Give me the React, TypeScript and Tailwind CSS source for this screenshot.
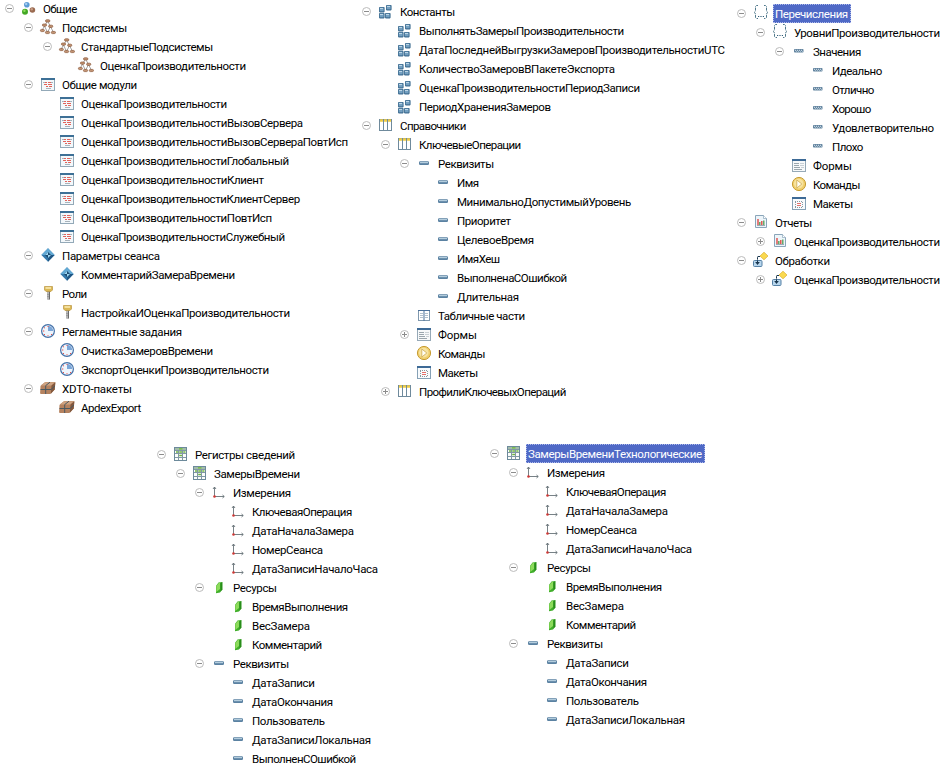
import { useLayoutEffect, useRef } from "react";
import type { ReactNode } from "react";

type Kind =
  | "common" | "subsystem" | "module" | "param" | "role" | "job" | "xdto" | "constant"
  | "catalog" | "attr" | "tabular" | "form" | "command" | "template" | "enum" | "value"
  | "report" | "processing" | "register" | "dimension" | "resource";

// [level, toggle, icon, label, label width, selected]
type Row = [number, "-" | "+" | "", Kind, string, number, boolean?];

const icons: Record<Kind, ReactNode> = {
  common: (
    <>
      <circle cx="7.8" cy="5.7" r="2.8" fill="#5b9bd5" />
      <circle cx="7.2" cy="5" r="1.2" fill="#a5cdf0" />
      <circle cx="6" cy="12.7" r="3" fill="#43a825" />
      <circle cx="5.4" cy="11.8" r="1.2" fill="#8fe05c" />
      <circle cx="13.4" cy="11" r="2.8" fill="#9a6a50" />
      <circle cx="12.8" cy="10.2" r="1.2" fill="#c69c84" />
    </>
  ),
  subsystem: (
    <>
      <path d="M9.5 3L6.5 8L4.3 12M6.5 8L9.5 14.5M9.5 3L12.5 8.5L9.5 14.5M12.5 8.5L15.5 14.5" stroke="#7d7a78" strokeWidth=".7" fill="none" />
      <g fill="#c39474" stroke="#8a5636" strokeWidth=".7">
        <rect x="7.5" y="1.8" width="4.4" height="2.2" rx="1.1" />
        <rect x="4.4" y="6" width="4.2" height="2.2" rx="1.1" />
        <rect x="10.6" y="7.2" width="4.2" height="2.2" rx="1.1" />
        <rect x="2.4" y="11.4" width="4" height="2.2" rx="1.1" />
        <rect x="7.4" y="13.4" width="4.2" height="2.2" rx="1.1" />
        <rect x="13.3" y="13.4" width="4.2" height="2.2" rx="1.1" />
      </g>
    </>
  ),
  module: (
    <>
      <rect x="3.5" y="3.5" width="13" height="12" fill="#f3f8fb" stroke="#93a9b8" />
      <rect x="3" y="3" width="14" height="2" fill="#3d7096" />
      <path d="M5 7.5h2M13 7.5h2M8 13.5h5" stroke="#a8b3bb" />
      <path d="M7 7.5h2M10 7.5h3M6 9.5h3M10 9.5h4M8 11.5h2M11 11.5h3" stroke="#e2635a" />
    </>
  ),
  param: (
    <>
      <path d="M10 2.3L16.6 9L10 15.7L3.4 9Z" fill="#3278ab" />
      <path d="M10 2.3L16.6 9H10L3.4 9Z" fill="#62a9d4" />
      <path d="M10 15.7L16.6 9H10Z" fill="#1f5684" />
      <path d="M10 6L13 9L10 12L7 9Z" fill="#1b486e" />
      <path d="M10 6L10 9L7 9Z M10 12V9H13Z" fill="#9ad6f1" />
    </>
  ),
  role: (
    <>
      <path d="M9 7h3v8l-1.5 1L9 15.5Z" fill="#b5b5b5" />
      <path d="M11.5 7.5v8" stroke="#6b6b6b" />
      <path d="M9.5 10.5h1M9.5 12.5h1" stroke="#858585" />
      <path d="M6.5 2.5h8v3.5l-1.5 1.5H8L6.5 6Z" fill="#dcb955" stroke="#b18a31" strokeWidth=".6" />
      <path d="M7.5 4h5.5" stroke="#fcf0bd" strokeWidth="1.4" />
    </>
  ),
  job: (
    <>
      <circle cx="10" cy="9" r="6.4" fill="#eef5fd" stroke="#4672a8" strokeWidth="1.2" />
      <path d="M10 9V3.8a5.2 5.2 0 0 1 5.2 5.2Z" fill="#7ba6d8" />
      <path d="M9.5 4.5h1M5 9h1.3M9.5 13.7h1M6 5.8h1M6 12.5h1M13 12.5h1" stroke="#ee4f47" />
    </>
  ),
  xdto: (
    <>
      <path d="M2.5 7Q3 6 4 5.5L7 3.3Q7.5 3 8.5 3H16.5Q17.5 3 17.4 4L16.7 10.5L13 14.6Q12.5 15 12 15H3Q2 15 2.1 14Z" fill="#b5825f" />
      <path d="M3 6.6L7 3.2H17.2L13.5 6.6Z" fill="#cfa381" />
      <path d="M13.5 6.6L17.3 3.3L16.7 10.5L12.8 14.8Z" fill="#82583e" />
      <path d="M2.5 10.5H13L17 7M7.7 15V6.6L12 3.2" stroke="#4a5961" fill="none" />
    </>
  ),
  constant: (
    <>
      {[[3, 5], [3, 11], [9, 11], [10, 3]].map(([x, y]) => (
        <g key={`${x}-${y}`}>
          <rect x={x} y={y} width="5.6" height="5.4" rx=".8" fill="#416f93" />
          <rect x={x + 0.8} y={y + 0.7} width="3.8" height="3.5" rx=".4" fill="#74a0c1" />
          <path d={`M${x + 1} ${y + 1.5}h3`} stroke="#bdd6e6" />
        </g>
      ))}
    </>
  ),
  catalog: (
    <>
      <rect x="3.5" y="3.5" width="12" height="11" fill="#fff" stroke="#6f8a9c" />
      <path d="M7.5 3v12M11.5 3v12" stroke="#6f8a9c" />
      <path d="M4 4.5h3M8 4.5h3M12 4.5h3" stroke="#efcd45" strokeWidth="2.6" />
    </>
  ),
  attr: (
    <>
      <rect x="5" y="7.3" width="10" height="3.7" rx="1.2" fill="#5b82a2" />
      <path d="M6 8.6h8" stroke="#b4cddd" strokeWidth="1.2" />
    </>
  ),
  tabular: (
    <>
      <rect x="4.5" y="4.5" width="11" height="10" fill="#fff" stroke="#7f98ae" />
      <path d="M4 4.5h12M10 4v11" stroke="#4a709a" />
      <path d="M6 7.5h3M11 7.5h3M6 9.5h3M11 9.5h3M6 11.5h3M11 11.5h3" stroke="#b3c1cc" />
    </>
  ),
  form: (
    <>
      <rect x="3.5" y="3.5" width="13" height="12" fill="#f7f9fa" stroke="#96a9b7" />
      <rect x="3" y="3" width="14" height="2" fill="#3d6a96" />
      <path d="M5 7.5h5M5 9.5h5M5 11.5h6M5 13.5h8" stroke="#9ba6ad" />
      <path d="M11 7.5h4M11 9.5h4M12 11.5h3" stroke="#c9d0d5" />
    </>
  ),
  command: (
    <>
      <circle cx="10" cy="9" r="6.6" fill="#f0cf6d" stroke="#c79d35" />
      <circle cx="9.7" cy="8.6" r="4.8" fill="#f7e3a0" />
      <path d="M7.8 5L12.8 9L7.8 13Z" fill="#fffef5" stroke="#cda94e" strokeWidth=".8" />
    </>
  ),
  template: (
    <>
      <rect x="3.5" y="3.5" width="13" height="12" fill="#f8fbfd" stroke="#86a1b6" />
      <rect x="3" y="3" width="14" height="2" fill="#3d6a96" />
      <path d="M6 7.5h8M6 13.5h8M6.5 8v6M13.5 8v6" stroke="#8a959d" strokeDasharray="1 1" />
      <path d="M8 9.5h4M8 11.5h4" stroke="#e46f69" />
    </>
  ),
  enum: (
    <>
      <path d="M7 1.5H5.5L4.5 2.5V6.5L3.5 8.5L4.5 10V13.5L5.5 14.5H7M13 1.5H14.5L15.5 2.5V6.5L16.5 8.5L15.5 10V13.5L14.5 14.5H13" stroke="#4f788b" strokeDasharray="3.2 .8" fill="none" />
      <path d="M7 12.5h1.2M9.4 12.5h1.2M11.8 12.5h1.2" stroke="#315e78" strokeWidth="1.2" />
    </>
  ),
  value: (
    <>
      <rect x="5" y="7" width="9.5" height="3.6" rx=".8" fill="#6485a0" />
      <path d="M6 8.3h8" stroke="#dbe7ee" strokeDasharray="1 1" />
      <path d="M7 9.4h7" stroke="#b7cedb" strokeDasharray="1 1" strokeWidth=".8" />
    </>
  ),
  report: (
    <>
      <path d="M4.5 2.5H12.5L15.5 5.5V14.5H4.5Z" fill="#edf5fa" stroke="#8aa5b9" />
      <path d="M12.5 2.5V5.5H15.5" fill="#fff" stroke="#8aa5b9" strokeWidth=".7" />
      <path d="M7 6v6M10.8 8v4" stroke="#df4a45" strokeWidth="1.4" />
      <path d="M8.8 9v3M12.8 7.5v4.5" stroke="#4fa053" strokeWidth="1.3" />
      <path d="M6 12.5h8" stroke="#8494a2" strokeWidth=".8" />
    </>
  ),
  processing: (
    <>
      <path d="M13 1.2L17 5L13 8.8L9 5Z" fill="#fad94f" stroke="#dbb030" strokeWidth=".7" />
      <rect x="2.5" y="9.5" width="8.5" height="6" rx="1" fill="#b8d6ed" stroke="#5580a5" />
      <path d="M9 5.5H6.5V12" fill="none" stroke="#18354d" strokeDasharray="2.4 .8" />
      <path d="M4.2 11L6.5 14L8.8 11Z" fill="#18354d" />
    </>
  ),
  register: (
    <>
      <rect x="3.5" y="2.5" width="12" height="13" fill="#fbfdfb" stroke="#6d8a9b" />
      <path d="M4 4h11" stroke="#a3bcaa" strokeWidth="2" />
      <path d="M8 3.8h3.5" stroke="#7bbf4e" strokeWidth="1.6" />
      <path d="M4 5.5h11M4 8.5h11M4 12.5h11M7.5 5v10M11.5 5v10" stroke="#8198a5" />
      <path d="M5 7h2M8.2 7h2.8M12.2 7h2.3M8.2 10.5h2.8" stroke="#6fb443" strokeWidth="1.6" />
    </>
  ),
  dimension: (
    <>
      <path d="M5.5 4V13.5H15M4 6L5.5 4L7 6M13.5 12L15.3 13.5L13.5 15" stroke="#687378" strokeWidth=".9" fill="none" />
      <circle cx="5.5" cy="13.5" r="1.3" fill="#cf3936" />
    </>
  ),
  resource: (
    <>
      <path d="M7 8L9.5 4.5L13.3 4V11.5L11 14.5L7 15.2Z" fill="#3fae2a" />
      <path d="M7.3 8.2L9.7 5L11 4.8V11L7.3 14Z" fill="#8ddb5c" />
      <path d="M11.5 5.5V13.7L13.3 11.5V4Z" fill="#2a8c1b" />
    </>
  ),
};

const P = "ОценкаПроизводительности";

const common: Row[] = [
  [0, "-", "common", "Общие", 34],
  [1, "-", "subsystem", "Подсистемы", 65],
  [2, "-", "subsystem", "СтандартныеПодсистемы", 132],
  [3, "", "subsystem", P, 146],
  [1, "-", "module", "Общие модули", 75],
  [2, "", "module", P, 146],
  [2, "", "module", P + "ВызовСервера", 222],
  [2, "", "module", P + "ВызовСервераПовтИсп", 267],
  [2, "", "module", P + "Глобальный", 208],
  [2, "", "module", P + "Клиент", 183],
  [2, "", "module", P + "КлиентСервер", 219],
  [2, "", "module", P + "ПовтИсп", 191],
  [2, "", "module", P + "Служебный", 204],
  [1, "-", "param", "Параметры сеанса", 98],
  [2, "", "param", "КомментарийЗамераВремени", 154],
  [1, "-", "role", "Роли", 25],
  [2, "", "role", "НастройкаИОценкаПроизводительности", 209],
  [1, "-", "job", "Регламентные задания", 120],
  [2, "", "job", "ОчисткаЗамеровВремени", 132],
  [2, "", "job", "ЭкспортОценкиПроизводительности", 188],
  [1, "-", "xdto", "XDTO-пакеты", 70],
  [2, "", "xdto", "ApdexExport", 60],
];

const constants: Row[] = [
  [0, "-", "constant", "Константы", 55],
  [1, "", "constant", "ВыполнятьЗамерыПроизводительности", 205],
  [1, "", "constant", "ДатаПоследнейВыгрузкиЗамеровПроизводительностиUTC", 306],
  [1, "", "constant", "КоличествоЗамеровВПакетеЭкспорта", 196],
  [1, "", "constant", P + "ПериодЗаписи", 221],
  [1, "", "constant", "ПериодХраненияЗамеров", 132],
  [0, "-", "catalog", "Справочники", 66],
  [1, "-", "catalog", "КлючевыеОперации", 102],
  [2, "-", "attr", "Реквизиты", 56],
  [3, "", "attr", "Имя", 22],
  [3, "", "attr", "МинимальноДопустимыйУровень", 174],
  [3, "", "attr", "Приоритет", 54],
  [3, "", "attr", "ЦелевоеВремя", 77],
  [3, "", "attr", "ИмяХеш", 43],
  [3, "", "attr", "ВыполненаСОшибкой", 110],
  [3, "", "attr", "Длительная", 62],
  [2, "", "tabular", "Табличные части", 87],
  [2, "+", "form", "Формы", 39],
  [2, "", "command", "Команды", 47],
  [2, "", "template", "Макеты", 40],
  [1, "+", "catalog", "ПрофилиКлючевыхОпераций", 147],
];

const enums: Row[] = [
  [0, "-", "enum", "Перечисления", 73, true],
  [1, "-", "enum", "УровниПроизводительности", 146],
  [2, "-", "value", "Значения", 48],
  [3, "", "value", "Идеально", 50],
  [3, "", "value", "Отлично", 42],
  [3, "", "value", "Хорошо", 39],
  [3, "", "value", "Удовлетворительно", 102],
  [3, "", "value", "Плохо", 31],
  [2, "", "form", "Формы", 39],
  [2, "", "command", "Команды", 47],
  [2, "", "template", "Макеты", 40],
  [0, "-", "report", "Отчеты", 37],
  [1, "+", "report", P, 146],
  [0, "-", "processing", "Обработки", 55],
  [1, "+", "processing", P, 146],
];

const registers: Row[] = [
  [0, "-", "register", "Регистры сведений", 100],
  [1, "-", "register", "ЗамерыВремени", 86],
  [2, "-", "dimension", "Измерения", 58],
  [3, "", "dimension", "КлючеваяОперация", 100],
  [3, "", "dimension", "ДатаНачалаЗамера", 102],
  [3, "", "dimension", "НомерСеанса", 71],
  [3, "", "dimension", "ДатаЗаписиНачалоЧаса", 126],
  [2, "-", "resource", "Ресурсы", 44],
  [3, "", "resource", "ВремяВыполнения", 96],
  [3, "", "resource", "ВесЗамера", 58],
  [3, "", "resource", "Комментарий", 70],
  [2, "-", "attr", "Реквизиты", 56],
  [3, "", "attr", "ДатаЗаписи", 63],
  [3, "", "attr", "ДатаОкончания", 81],
  [3, "", "attr", "Пользователь", 73],
  [3, "", "attr", "ДатаЗаписиЛокальная", 119],
  [3, "", "attr", "ВыполненСОшибкой", 104],
];

const technological: Row[] = [
  [0, "-", "register", "ЗамерыВремениТехнологические", 174, true],
  [1, "-", "dimension", "Измерения", 58],
  [2, "", "dimension", "КлючеваяОперация", 100],
  [2, "", "dimension", "ДатаНачалаЗамера", 102],
  [2, "", "dimension", "НомерСеанса", 71],
  [2, "", "dimension", "ДатаЗаписиНачалоЧаса", 126],
  [1, "-", "resource", "Ресурсы", 44],
  [2, "", "resource", "ВремяВыполнения", 96],
  [2, "", "resource", "ВесЗамера", 58],
  [2, "", "resource", "Комментарий", 70],
  [1, "-", "attr", "Реквизиты", 56],
  [2, "", "attr", "ДатаЗаписи", 63],
  [2, "", "attr", "ДатаОкончания", 81],
  [2, "", "attr", "Пользователь", 73],
  [2, "", "attr", "ДатаЗаписиЛокальная", 119],
];

function Toggle({ sign }: { sign: "-" | "+" }) {
  return (
    <svg className="size-[19px]" viewBox="0 0 19 19">
      <circle cx="9.5" cy="9.5" r="4" fill="#fff" stroke="#b4b4b4" strokeWidth=".9" />
      <path d={sign === "+" ? "M7 9.5h5M9.5 7v5" : "M7 9.5h5"} stroke="#8c8c8c" />
    </svg>
  );
}

// Spreads the letters so that the label takes its nominal width.
function Label({ text, width, selected }: { text: string; width: number; selected?: boolean }) {
  const ref = useRef<HTMLSpanElement>(null);
  useLayoutEffect(() => {
    const el = ref.current;
    if (!el) return;
    el.style.letterSpacing = "0px";
    const natural = el.getBoundingClientRect().width;
    el.style.letterSpacing = `${(width - 0.3 - natural) / text.length}px`;
  }, [text, width]);
  return (
    <span
      className={
        selected
          ? "ml-[3px] flex h-[19px] items-center border border-dotted border-[#aeb9ea] bg-[#4f69c6] pr-[2px] pl-px pt-px text-white"
          : "ml-[5px] flex h-[19px] items-center pt-px text-black"
      }
    >
      <span ref={ref}>{text}</span>
    </span>
  );
}

function Tree({ rows, className }: { rows: Row[]; className: string }) {
  return (
    <div className={`flex shrink-0 flex-col ${className}`}>
      {rows.map(([level, toggle, icon, text, width, selected], i) => (
        <div key={i} className="flex h-[19px] items-center whitespace-nowrap">
          {Array.from({ length: level }, (_, n) => <span key={n} className="w-[19px] shrink-0" />)}
          <span className="size-[19px] shrink-0">{toggle && <Toggle sign={toggle} />}</span>
          <svg className="size-[19px] shrink-0" viewBox="0 0 19 19">{icons[icon]}</svg>
          <Label text={text} width={width} selected={selected} />
        </div>
      ))}
    </div>
  );
}

export default function App() {
  return (
    <main className="h-[777px] w-[951px] overflow-hidden bg-white font-[Roboto,'Liberation_Sans',sans-serif] text-[11.5px] leading-[14px]">
      <div className="-mt-px flex h-[445px] items-start">
        <Tree rows={common} className="w-[357px]" />
        <Tree rows={constants} className="mt-[3px] w-[375px]" />
        <Tree rows={enums} className="mt-[5px] w-[219px]" />
      </div>
      <div className="flex items-start pl-[152px]">
        <Tree rows={registers} className="mt-px w-[333px]" />
        <Tree rows={technological} className="w-[300px]" />
      </div>
    </main>
  );
}
